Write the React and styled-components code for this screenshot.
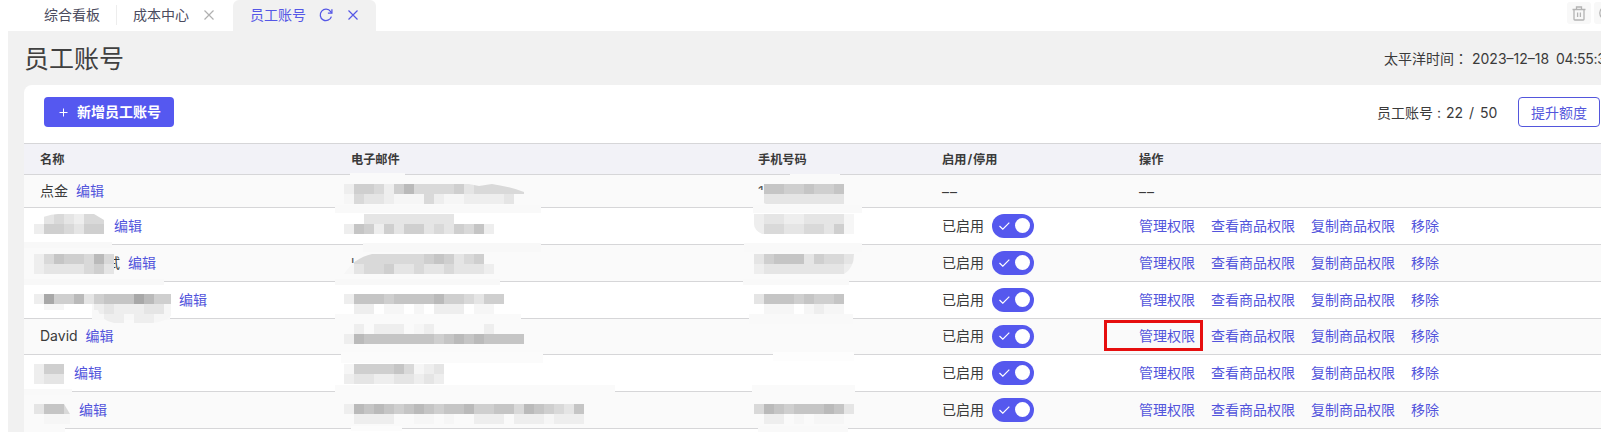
import React from 'react';
import styled, { createGlobalStyle } from 'styled-components';

const GlobalStyle = createGlobalStyle`
  * { box-sizing: border-box; }
  body {
    margin: 0;
    background: #fff;
    color: #3a3a3a;
    font-family: Inter, "Noto Sans CJK SC", sans-serif;
    font-size: 14px;
    overflow: hidden;
  }
`;

// Shades of the mosaic tiles, '.' leaves a tile out
const SHADES = {
  1: '#f6f6f6',
  2: '#eeeeee',
  3: '#e5e5e5',
  4: '#d9d9d9',
  5: '#cfcfcf',
  6: '#c5c5c5',
  7: '#bababa',
  8: '#a8a8a8',
};

// x / y are the offset inside the cell, wipes are the soft patches under the tiles
const accounts = [
  {
    name: '点金',
    height: 33,
    email: {
      x: 9, y: 9,
      tiles: ['255425744445344444', '14332111421122223'],
      wipes: [[15, -2, 55, 4, '#fafafa'], [0, 30, 206, 8, '#f9f9f9']],
      clip: 'M0 0H125L135 2L148 0Q168 3 180 8V20H0Z',
    },
    phone: {
      x: 12, y: 9,
      tiles: ['.66556556', '.33333333'],
      wipes: [[14, 15, 8, 12, '#fafafa'], [48, -1, 50, 2, '#fafafa'], [11, 30, 109, 8, '#f9f9f9']],
      clip: 'M10 0H90V20H12Q2 16 2 10Z',
      lead: '1',
    },
  },
  {
    hidden: 66,
    height: 37,
    mask: {
      x: 10, y: 6,
      tiles: ['.34324433', '255435556'],
      wipes: [[0, 34, 88, 6, '#f8f8f8']],
      clip: 'M0 20V10Q10 0 24 0H60L70 6V20Z',
    },
    email: { x: 9, y: 6, tiles: ['..333333333', '265253553435462'], wipes: [[28, 35, 178, 9, '#f8f8f8']] },
    phone: { x: 12, y: 6, tiles: ['2332233331', '2443344351'], wipes: [[2, 35, 118, 9, '#f9f9f9']], clip: 'M0 0H100V20H8Q0 16 0 10Z' },
  },
  {
    hidden: 80,
    tail: '试',
    height: 37,
    mask: { x: 10, y: 9, tiles: ['24655474', '23333453'], wipes: [[0, 34, 140, 6, '#f8f8f8']] },
    email: {
      x: 9, y: 9,
      tiles: ['.4444444565345', '134453343343332'],
      wipes: [[14, 18, 12, 12, '#fafafa'], [0, 34, 165, 6, '#f8f8f8']],
      clip: 'M0 20Q10 4 28 0H150V20Z',
      lead: 'k',
    },
    phone: { x: 12, y: 9, tiles: ['3566635443', '2333333332'], wipes: [[1, 34, 106, 6, '#f9f9f9']], clip: 'M0 0H100Q100 14 90 20H0Z' },
  },
  {
    hidden: 131,
    height: 37,
    mask: {
      x: 10, y: 12,
      tiles: ['28557356668755', '.11...23222331', '.......22.2211'],
      wipes: [[68, 18, 78, 20, '#f8f8f8']],
      clip: 'M0 0H137V22Q130 28 118 29H80Q66 26 64 16H0Z',
    },
    email: { x: 9, y: 12, tiles: ['2666566667554355', '.22.11.1.222.11'], wipes: [[0, 32, 186, 5, '#fafafa']] },
    phone: { x: 12, y: 12, tiles: ['366656556', '.111.1211'], wipes: [[7, 32, 104, 10, '#f9f9f9']] },
  },
  {
    name: 'David',
    height: 36,
    marked: true,
    email: { x: 9, y: 5, tiles: ['.2.222.12.....2', '276666666567676666'], wipes: [[6, 33, 202, 11, '#fbfbfb']] },
    phone: { x: 12, y: 5, tiles: [], wipes: [[31, 33, 81, 9, '#fdfdfd']] },
  },
  {
    hidden: 26,
    height: 37,
    mask: { x: 10, y: 9, tiles: ['255', '233'], wipes: [[0, 34, 48, 6, '#f9f9f9']] },
    email: { x: 9, y: 9, tiles: ['1555564123', '2332233232'], wipes: [[0, 30, 280, 7, '#fafafa']] },
    phone: { x: 12, y: 9, tiles: [], wipes: [[10, 30, 103, 7, '#fafafa']] },
  },
  {
    hidden: 31,
    height: 37,
    mask: { x: 10, y: 12, tiles: ['3664', '.111'], wipes: [[0, 34, 41, 6, '#fafafa']], clip: 'M0 0H30L36 10V20H0Z' },
    email: { x: 9, y: 12, tiles: ['276765676566755664765436', '.2222..11.1..222.2221222'], wipes: [[16, 34, 51, 5, '#fcfcfc']] },
    phone: { x: 12, y: 12, tiles: ['4765666763', '.22.1.111'], wipes: [[16, 34, 90, 6, '#f9f9f9']] },
  },
];

const Mosaic = ({ x, y, tiles, wipes = [], clip, id }) => (
  <Overlay>
    {wipes.map(([wx, wy, w, h, fill], i) => (
      <rect key={i} x={wx} y={wy} width={w} height={h} fill={fill} />
    ))}
    {clip && (
      <clipPath id={id}>
        <path d={clip} />
      </clipPath>
    )}
    <g transform={`translate(${x} ${y})`}>
      <g clipPath={clip ? `url(#${id})` : undefined} shapeRendering="crispEdges">
        {tiles.map((line, row) =>
          [...line].map((shade, col) =>
            shade === '.' ? null : (
              <rect key={`${row}-${col}`} x={col * 10} y={row * 10} width="10" height="10" fill={SHADES[shade]} />
            )
          )
        )}
      </g>
    </g>
  </Overlay>
);

const CloseIcon = ({ size = 10 }) => (
  <svg width={size} height={size} viewBox="0 0 10 10" fill="none" stroke="currentColor" strokeWidth="1.2">
    <path d="M.5 .5L9.5 9.5M9.5 .5L.5 9.5" />
  </svg>
);

const RefreshIcon = () => (
  <svg width="14" height="14" viewBox="0 0 14 14" fill="none" stroke="currentColor" strokeWidth="1.3">
    <path d="M12.4 8.6A5.7 5.7 0 1 1 11.6 3.6L12.6 5" />
    <path d="M12.9 1.2V5.2H8.9" />
  </svg>
);

const TrashIcon = () => (
  <svg width="14" height="15" viewBox="0 0 14 15" fill="none" stroke="currentColor" strokeWidth="1.3">
    <path d="M.5 3.5H13.5M4.5 3.5V1H9.5V3.5M2 3.5V13.2Q2 14 2.8 14H11.2Q12 14 12 13.2V3.5M5.6 6.5V11M8.4 6.5V11" />
  </svg>
);

const Switch = ({ height }) => (
  <Track $height={height}>
    <svg width="11" height="8" viewBox="0 0 11 8" fill="none" stroke="#fff" strokeWidth="1.2">
      <path d="M.5 4L3.8 7.2L10.3 .7" />
    </svg>
    <Knob />
  </Track>
);

const AccountRow = ({ account, index }) => {
  const enabled = index > 0;
  return (
    <Row $height={account.height} $striped={index % 2 === 0}>
      <Cell>
        {account.name && <Label>{account.name}</Label>}
        {account.hidden && <HiddenName $width={account.hidden}>{account.tail}</HiddenName>}
        <Link>编辑</Link>
        {account.mask && <Mosaic id={`name-${index}`} {...account.mask} />}
      </Cell>
      <Cell>
        {account.email.lead && <Lead>{account.email.lead}</Lead>}
        <Mosaic id={`email-${index}`} {...account.email} />
      </Cell>
      <Cell>
        {account.phone.lead && <Lead>{account.phone.lead}</Lead>}
        <Mosaic id={`phone-${index}`} {...account.phone} />
      </Cell>
      <Cell>
        {enabled ? (
          <>
            <Label>已启用</Label>
            <Switch height={account.marked ? 23 : 24} />
          </>
        ) : (
          <Dashes>––</Dashes>
        )}
      </Cell>
      <Cell $gap={16}>
        {enabled ? (
          <>
            <Link>管理权限</Link>
            <Link>查看商品权限</Link>
            <Link>复制商品权限</Link>
            <Link>移除</Link>
          </>
        ) : (
          <Dashes>––</Dashes>
        )}
        {account.marked && <Marker />}
      </Cell>
    </Row>
  );
};

export default function App() {
  return (
    <Page>
      <GlobalStyle />
      <TabBar>
        <Tab $width={108}>
          <TabLabel>综合看板</TabLabel>
        </Tab>
        <Tab $width={117} $divided>
          <TabLabel>成本中心</TabLabel>
          <Muted>
            <CloseIcon />
          </Muted>
        </Tab>
        <Tab $width={143} $active>
          <TabLabel>员工账号</TabLabel>
          <TabIcon>
            <RefreshIcon />
          </TabIcon>
          <CloseIcon />
        </Tab>
        <TabTools>
          <ToolButton>
            <TrashIcon />
          </ToolButton>
          <ToolButton>
            <svg width="14" height="14" viewBox="0 0 14 14" fill="none" stroke="currentColor" strokeWidth="1.3">
              <circle cx="7" cy="7" r="6.2" />
            </svg>
          </ToolButton>
        </TabTools>
      </TabBar>
      <Main>
        <TitleBar>
          <Title>员工账号</Title>
          <Clock>
            太平洋时间<Colon>：</Colon>
            <DateText>2023–12–18</DateText>
            <TimeText>04:55:3</TimeText>
          </Clock>
        </TitleBar>
        <Card>
          <Toolbar>
            <AddButton>
              <svg width="9" height="9" viewBox="0 0 9 9" stroke="#fff" strokeWidth="1">
                <path d="M4.5 .5V8.5M.5 4.5H8.5" />
              </svg>
              <ButtonLabel>新增员工账号</ButtonLabel>
            </AddButton>
            <Quota>
              <Count>
                员工账号 :<Numbers>22 / 50</Numbers>
              </Count>
              <OutlineButton>提升额度</OutlineButton>
            </Quota>
          </Toolbar>
          <HeadRow>
            <Cell>名称</Cell>
            <Cell>电子邮件</Cell>
            <Cell>手机号码</Cell>
            <Cell>
              启用<Slash>/</Slash>停用
            </Cell>
            <Cell>操作</Cell>
          </HeadRow>
          {accounts.map((account, i) => (
            <AccountRow key={i} account={account} index={i} />
          ))}
        </Card>
      </Main>
    </Page>
  );
}

const Page = styled.div`
  width: 1601px;
  height: 432px;
  padding-left: 8px;
  overflow: hidden;
`;

const TabBar = styled.div`
  display: flex;
  height: 31px;
  background: #fff;
`;

const Tab = styled.div`
  position: relative;
  display: flex;
  align-items: center;
  flex: none;
  width: ${props => props.$width}px;
  padding-left: ${props => (props.$divided || props.$active ? 17 : 36)}px;
  padding-bottom: 1px;
  color: ${props => (props.$active ? '#5557e6' : '#4b4b5e')};
  background: ${props => (props.$active ? '#f1f1f1' : 'transparent')};
  border-radius: 6px 6px 0 0;

  ${props => props.$divided && `
    &::before {
      content: '';
      position: absolute;
      left: 0;
      top: 5px;
      height: 20px;
      border-left: 1px solid #ededed;
    }
  `}
`;

const TabLabel = styled.span`
  padding-bottom: 2px;
`;

const Muted = styled.span`
  display: flex;
  margin-left: 15px;
  color: #b0b0b0;
`;

const TabIcon = styled.span`
  display: flex;
  margin: 0 15px 0 13px;
`;

const TabTools = styled.div`
  display: flex;
  flex: none;
  gap: 3px;
  margin-left: auto;
  margin-right: -17px;
  padding-top: 2px;
`;

const ToolButton = styled.div`
  display: flex;
  align-items: center;
  justify-content: center;
  width: 24px;
  height: 22px;
  border-radius: 3px;
  background: #f8f8f8;
  color: #b3b3b3;
`;

const Main = styled.div`
  height: 401px;
  padding-left: 16px;
  background: #f1f1f1;
`;

const TitleBar = styled.div`
  display: flex;
  justify-content: space-between;
  align-items: center;
  height: 54px;
`;

const Title = styled.h1`
  margin: 0;
  padding-top: 1px;
  color: #404040;
  font-size: 25px;
  font-weight: 400;
  line-height: 54px;
`;

const Clock = styled.div`
  display: flex;
  align-items: baseline;
  width: 217px;
  padding-bottom: 1px;
  white-space: nowrap;
`;

const Colon = styled.span`
  font-family: "Noto Sans CJK TC", sans-serif;
`;

const DateText = styled.span`
  flex: none;
  width: 84px;
  margin-left: 4px;
`;

const TimeText = styled.span`
  letter-spacing: -0.3px;
`;

const Card = styled.div`
  height: 347px;
  border-radius: 8px 0 0 0;
  background: #fff;
`;

const Toolbar = styled.div`
  display: flex;
  align-items: center;
  justify-content: space-between;
  height: 58px;
  padding: 0 1px 4px 20px;
`;

const AddButton = styled.button`
  display: flex;
  align-items: center;
  gap: 9px;
  width: 130px;
  height: 30px;
  padding: 0 0 0 15px;
  border: 0;
  border-radius: 4px;
  background: #5558f0;
  color: #fff;
  font: bold 14px Inter, "Noto Sans CJK SC", sans-serif;
  white-space: nowrap;
`;

const ButtonLabel = styled.span`
  padding-bottom: 2px;
`;

const Quota = styled.div`
  display: flex;
  align-items: center;
`;

const Count = styled.span`
  width: 141px;
  white-space: pre;
`;

const Numbers = styled.span`
  margin-left: 5px;
  word-spacing: 2px;
`;

const OutlineButton = styled.button`
  width: 82px;
  height: 30px;
  padding: 0;
  border: 1px solid #5356dc;
  border-radius: 4px;
  background: #fff;
  color: #5356dc;
  font: 14px Inter, "Noto Sans CJK SC", sans-serif;
`;

const Row = styled.div`
  display: grid;
  grid-template-columns: 311px 407px 184px 197px 1fr;
  height: ${props => props.$height}px;
  background: ${props => (props.$striped ? '#fafafa' : '#fff')};
  border-bottom: 1px solid #d6d6d8;
`;

const Cell = styled.div`
  position: relative;
  display: flex;
  align-items: center;
  gap: ${props => props.$gap || 8}px;
  padding-left: 16px;
  white-space: nowrap;
`;

const HeadRow = styled(Row)`
  height: 32px;
  border-top: 1px solid #d6d6d8;
  background: #f2f2f7;
  font-size: 12.2px;
  font-weight: bold;

  ${Cell} {
    gap: 0;
    padding-bottom: 1px;
  }
`;

const Slash = styled.span`
  margin: 0 1px;
`;

const Label = styled.span`
  padding-bottom: 3px;
`;

const Link = styled.a`
  padding-bottom: 3px;
  color: #5254dc;
`;

const HiddenName = styled.span`
  width: ${props => props.$width}px;
  padding-bottom: 3px;
  text-align: right;
`;

const Lead = styled.span`
  color: #555;
`;

const Dashes = styled.span`
  letter-spacing: 1px;
`;

// Lies over the cell, patches may reach across the row borders
const Overlay = styled.svg`
  position: absolute;
  left: 0;
  top: 0;
  width: 1px;
  height: 1px;
  overflow: visible;
  z-index: 1;
`;

const Track = styled.span`
  display: flex;
  align-items: center;
  justify-content: space-between;
  width: 42px;
  height: ${props => props.$height}px;
  padding: 0 4px 1px 7px;
  border-radius: 12px;
  background: #5558ee;
`;

const Knob = styled.span`
  width: 15px;
  height: 15px;
  border-radius: 50%;
  background: #fff;
`;

const Marker = styled.span`
  position: absolute;
  left: -19px;
  top: 1px;
  width: 99px;
  height: 31px;
  border: 3px solid #e60e0e;
`;
